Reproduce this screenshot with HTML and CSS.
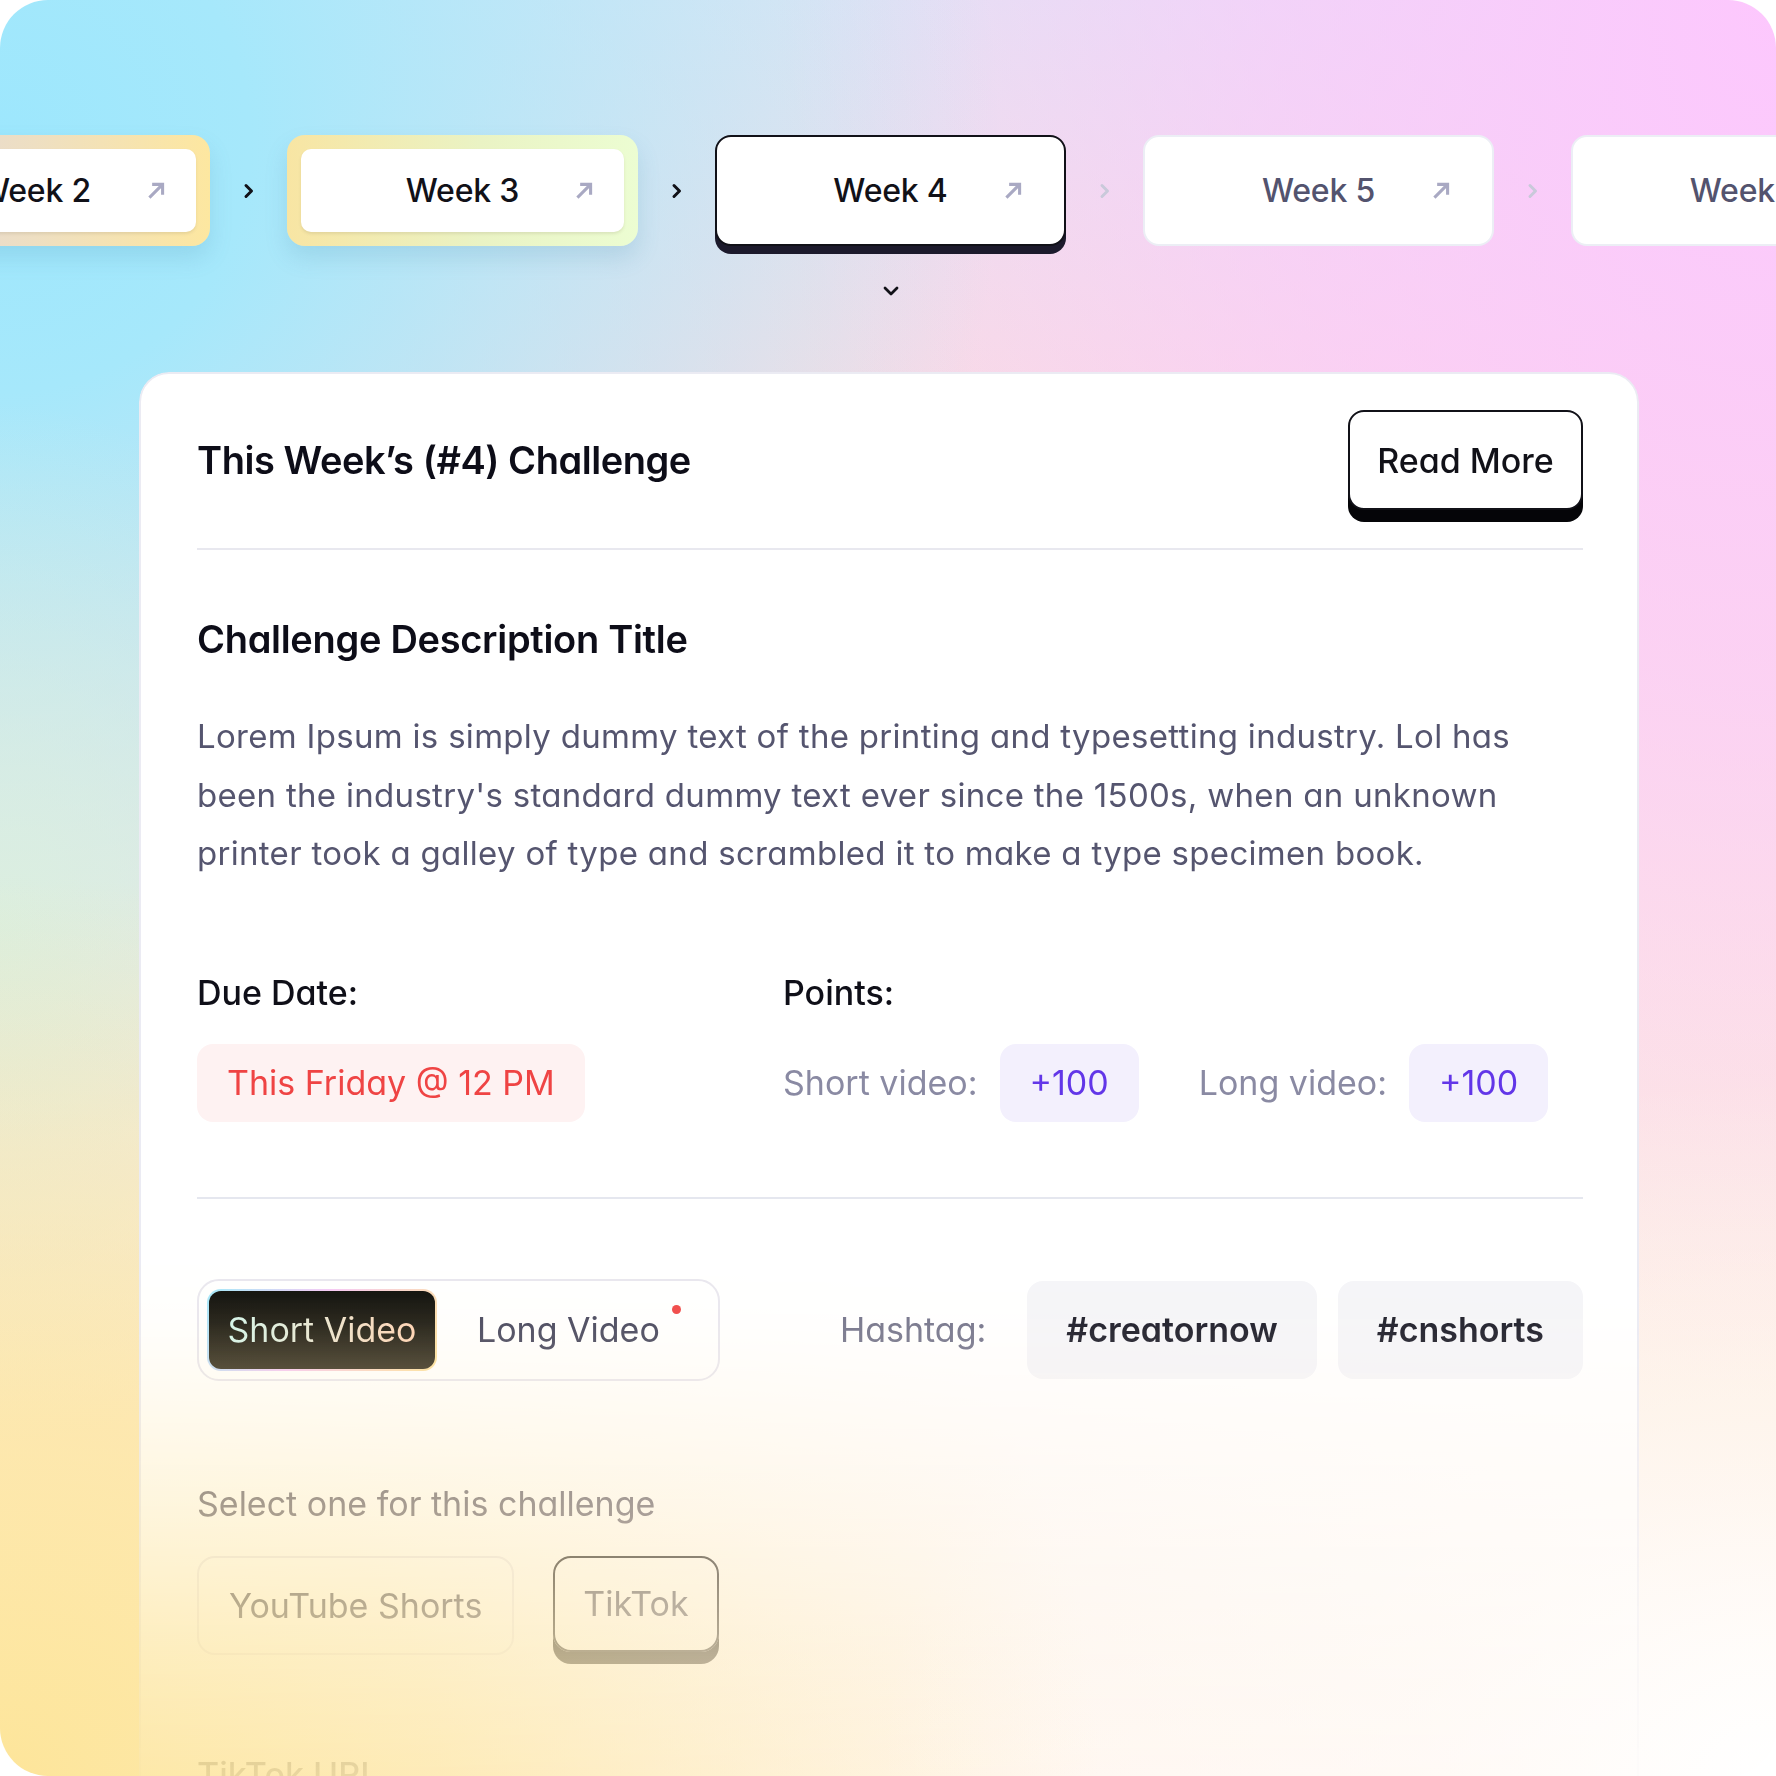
FILE: index.html
```html
<!DOCTYPE html>
<html lang="en">
<head>
<meta charset="utf-8">
<title>Weekly Challenge</title>
<link rel="stylesheet" href="styles.css">
</head>
<body>
<div class="page">
  <nav class="weeks">
    <div class="week week--past week--w2">
      <div class="week-inner">
        <span class="week-label">Week 2</span>
        <svg class="week-arrow" viewBox="0 0 20 20"><path d="M4 16 L16 4 M6.5 4 H16 V13.5"/></svg>
      </div>
    </div>
    <div class="sep sep--past"><svg viewBox="0 0 12 16"><path d="M3 2.5 L8.5 8 L3 13.5"/></svg></div>
    <div class="week week--past week--w3">
      <div class="week-inner">
        <span class="week-label">Week 3</span>
        <svg class="week-arrow" viewBox="0 0 20 20"><path d="M4 16 L16 4 M6.5 4 H16 V13.5"/></svg>
      </div>
    </div>
    <div class="sep sep--past"><svg viewBox="0 0 12 16"><path d="M3 2.5 L8.5 8 L3 13.5"/></svg></div>
    <div class="week-col">
      <div class="week week--current">
        <div class="week-inner">
          <span class="week-label">Week 4</span>
          <svg class="week-arrow" viewBox="0 0 20 20"><path d="M4 16 L16 4 M6.5 4 H16 V13.5"/></svg>
        </div>
      </div>
      <svg class="down-chevron" viewBox="0 0 16 10"><path d="M2 2 L8 8 L14 2"/></svg>
    </div>
    <div class="sep sep--future"><svg viewBox="0 0 12 16"><path d="M3 2.5 L8.5 8 L3 13.5"/></svg></div>
    <div class="week week--future">
      <div class="week-inner">
        <span class="week-label">Week 5</span>
        <svg class="week-arrow" viewBox="0 0 20 20"><path d="M4 16 L16 4 M6.5 4 H16 V13.5"/></svg>
      </div>
    </div>
    <div class="sep sep--future"><svg viewBox="0 0 12 16"><path d="M3 2.5 L8.5 8 L3 13.5"/></svg></div>
    <div class="week week--future">
      <div class="week-inner">
        <span class="week-label">Week 6</span>
        <svg class="week-arrow" viewBox="0 0 20 20"><path d="M4 16 L16 4 M6.5 4 H16 V13.5"/></svg>
      </div>
    </div>
  </nav>

  <section class="card">
    <header class="card-head">
      <h1 class="card-title">This Week’s (#4) Challenge</h1>
      <button class="btn-read">Read More</button>
    </header>
    <div class="divider"></div>

    <h2 class="desc-title">Challenge Description Title</h2>
    <p class="desc">Lorem Ipsum is simply dummy text of the printing and typesetting industry. Lol has been the industry's standard dummy text ever since the 1500s, when an unknown printer took a galley of type and scrambled it to make a type specimen book.</p>

    <div class="meta">
      <div class="meta-col">
        <div class="meta-label">Due Date:</div>
        <div class="meta-row">
          <span class="pill pill--due">This Friday @ 12 PM</span>
        </div>
      </div>
      <div class="meta-col">
        <div class="meta-label">Points:</div>
        <div class="meta-row">
          <span class="points-label">Short video:</span>
          <span class="pill pill--pts">+100</span>
          <span class="points-label points-label--second">Long video:</span>
          <span class="pill pill--pts">+100</span>
        </div>
      </div>
    </div>

    <div class="divider divider--second"></div>

    <div class="format-row">
      <div class="toggle">
        <div class="toggle-opt toggle-opt--active"><span class="toggle-text">Short Video</span></div>
        <div class="toggle-opt toggle-opt--idle">Long Video<span class="dot"></span></div>
      </div>
      <div class="hashtags">
        <span class="hashtag-label">Hashtag:</span>
        <span class="hashtag">#creatornow</span>
        <span class="hashtag">#cnshorts</span>
      </div>
    </div>

    <div class="select-label">Select one for this challenge</div>
    <div class="platforms">
      <button class="platform">YouTube Shorts</button>
      <button class="platform platform--active">TikTok</button>
    </div>

    <div class="url-label">TikTok URL</div>
    <div class="url-input"></div>
  </section>
</div>
</body>
</html>
```

FILE: styles.css
```css
* { box-sizing: border-box; }

body {
  margin: 0;
  background: #ffffff;
}

.page {
  width: 1776px;
  height: 1776px;
  border-radius: 48px;
  overflow: hidden;
  padding-top: 135px;
  font-family: Inter, "Noto Sans", sans-serif;
  font-feature-settings: "cv11" 1;
  background:
    radial-gradient(ellipse 900px 700px at 100% 100%, #ffffff 0%, rgba(255, 252, 250, 0.6) 40%, rgba(255, 255, 255, 0) 100%),
    radial-gradient(ellipse 1100px 900px at 0% 100%, #fde59a 0%, rgba(253, 229, 154, 0.7) 40%, rgba(253, 229, 154, 0) 100%),
    radial-gradient(ellipse 420px 520px at 0% 52%, rgba(218, 240, 222, 0.85) 0%, rgba(218, 240, 222, 0) 100%),
    radial-gradient(ellipse 1000px 1000px at 0% 8%, #9de7fd 0%, #a6e8fb 25%, rgba(166, 232, 251, 0) 100%),
    radial-gradient(ellipse 1000px 1400px at 100% 0%, #fdc7fd 0%, rgba(253, 199, 253, 0.6) 50%, rgba(253, 199, 253, 0) 100%),
    linear-gradient(180deg, #e2e4f2 0%, #f7dde4 22%, #fbe6e2 50%, #fdeee0 80%, #fff6ee 100%);
}

/* ---------- week strip ---------- */
.weeks {
  display: flex;
  align-items: flex-start;
  margin-left: -141px;
}

.week {
  flex: none;
  width: 351px;
  height: 111px;
}

.week-col {
  flex: none;
  display: flex;
  flex-direction: column;
  align-items: center;
}

.week-inner {
  height: 100%;
  display: grid;
  grid-template-columns: 1fr auto 1fr;
  align-items: center;
  background: #ffffff;
}

.week-label {
  grid-column: 2;
  font-size: 32px;
  font-weight: 500;
  letter-spacing: -0.2px;
  color: #111118;
}

.week-arrow {
  grid-column: 3;
  justify-self: end;
  width: 22px;
  height: 22px;
  fill: none;
  stroke: #a9a9c3;
  stroke-width: 2.8;
  stroke-linecap: butt;
  stroke-linejoin: miter;
}

.week--past {
  padding: 14px;
  border-radius: 18px;
  box-shadow: 0 12px 22px rgba(70, 140, 170, 0.18);
}

.week--past .week-inner {
  border-radius: 10px;
  box-shadow: 0 2px 3px rgba(120, 110, 80, 0.15);
}

.week--past .week-arrow { margin-right: 29px; }

.week--w2 { background: linear-gradient(90deg, #e2d6dc 0%, #eedfc2 50%, #fde7a0 100%); }
.week--w3 { background: linear-gradient(90deg, #f8e5a3 0%, #eaf3c4 55%, #ecfdd2 100%); }

.week--current .week-inner {
  border: 2px solid #111118;
  border-radius: 16px;
  box-shadow: 0 8px 0 #1c1a2c;
}

.week--current .week-arrow { margin-right: 40px; }

.week--future .week-inner {
  border: 2px solid #eceef5;
  border-radius: 16px;
}

.week--future .week-label { color: #53536e; }
.week--future .week-arrow { margin-right: 40px; }

.sep {
  flex: none;
  width: 77px;
  height: 111px;
  display: flex;
  align-items: center;
  justify-content: center;
}

.sep svg {
  width: 12px;
  height: 16px;
  fill: none;
  stroke-width: 3;
  stroke-linecap: round;
  stroke-linejoin: round;
}

.sep--past svg { stroke: #111118; }
.sep--future svg { stroke: #c9c9da; }

.down-chevron {
  margin-top: 40px;
  width: 16px;
  height: 10px;
  fill: none;
  stroke: #111118;
  stroke-width: 2.8;
  stroke-linecap: round;
  stroke-linejoin: round;
}

/* ---------- main card ---------- */
.card {
  width: 1500px;
  margin: 76px 0 0 139px;
  background: #ffffff;
  border: 2px solid #ebebf3;
  border-radius: 30px;
  padding: 36px 54px 200px 56px;
  -webkit-mask-image: linear-gradient(to bottom, #000 0px, #000 880px, rgba(0,0,0,0.95) 950px, rgba(0,0,0,0.6) 1128px, rgba(0,0,0,0.27) 1283px, rgba(0,0,0,0.08) 1404px, rgba(0,0,0,0.02) 1520px);
  mask-image: linear-gradient(to bottom, #000 0px, #000 880px, rgba(0,0,0,0.95) 950px, rgba(0,0,0,0.6) 1128px, rgba(0,0,0,0.27) 1283px, rgba(0,0,0,0.08) 1404px, rgba(0,0,0,0.02) 1520px);
}

.card-head {
  display: flex;
  align-items: center;
  justify-content: space-between;
}

.card-title {
  margin: 0;
  font-size: 38px;
  font-weight: 600;
  letter-spacing: -0.45px;
  color: #0d0d18;
}

.btn-read {
  width: 235px;
  height: 100px;
  border: 2px solid #111118;
  border-radius: 16px;
  background: #ffffff;
  box-shadow: 0 12px 0 #050508;
  font-family: inherit;
  font-feature-settings: inherit;
  font-size: 34px;
  font-weight: 500;
  color: #111118;
  padding: 0;
}

.divider {
  height: 2px;
  background: #e8e8ef;
  margin-top: 38px;
}

.desc-title {
  margin: 66px 0 0;
  font-size: 38px;
  line-height: 46px;
  font-weight: 600;
  letter-spacing: -0.3px;
  color: #0d0d18;
}

.desc {
  margin: 45px 0 0;
  max-width: 1345px;
  font-size: 33px;
  line-height: 58.5px;
  letter-spacing: 0.3px;
  color: #55556f;
}

.meta {
  margin-top: 90px;
  display: grid;
  grid-template-columns: 586px 1fr;
}

.meta-label {
  font-size: 34px;
  line-height: 40px;
  font-weight: 500;
  color: #0f0f18;
}

.meta-row {
  margin-top: 31px;
  display: flex;
  align-items: center;
}

.pill {
  height: 78px;
  display: inline-flex;
  align-items: center;
  padding: 0 30px;
  border-radius: 16px;
  font-size: 34px;
}

.pill--due {
  background: #fef2f2;
  color: #ef4444;
}

.pill--pts {
  background: #f3f0fd;
  color: #6236e8;
}

.points-label {
  font-size: 34px;
  color: #8a8aa3;
  margin-right: 22px;
}

.points-label--second { margin-left: 60px; }

.divider--second {
  margin-top: 75px;
  background: #e5e7ef;
}

.format-row {
  margin-top: 80px;
  display: flex;
  align-items: center;
  justify-content: space-between;
}

.toggle {
  display: flex;
  align-items: center;
  border: 2px solid #e9e7ef;
  border-radius: 22px;
  padding: 8px;
}

.toggle-opt {
  height: 82px;
  display: flex;
  align-items: center;
  font-size: 34px;
  position: relative;
}

.toggle-opt--active {
  width: 230px;
  justify-content: center;
  border-radius: 14px;
  border: 2px solid transparent;
  background:
    linear-gradient(180deg, #0e0e0b 0%, #3b3526 100%) padding-box,
    linear-gradient(120deg, #a3e9fb 0%, #f6c9f5 45%, #fde39c 100%) border-box;
}

.toggle-text {
  background: linear-gradient(90deg, #d4f6ec 0%, #ffd3b4 100%);
  -webkit-background-clip: text;
  background-clip: text;
  color: transparent;
}

.toggle-opt--idle {
  padding: 0 50px 0 40px;
  color: #4a4a60;
}

.dot {
  position: absolute;
  top: 16px;
  right: 29px;
  width: 9px;
  height: 9px;
  border-radius: 50%;
  background: #f04848;
}

.hashtags {
  display: flex;
  align-items: center;
}

.hashtag-label {
  font-size: 34px;
  color: #76768c;
  margin-right: 41px;
}

.hashtag {
  height: 98px;
  display: inline-flex;
  align-items: center;
  padding: 0 39px;
  border-radius: 16px;
  background: #f5f5f8;
  font-size: 34px;
  font-weight: 600;
  color: #1c1c28;
}

.hashtag + .hashtag { margin-left: 21px; }

.select-label {
  margin-top: 103px;
  font-size: 34px;
  line-height: 40px;
  color: #6a6676;
}

.platforms {
  margin-top: 32px;
  display: flex;
  gap: 39px;
}

.platform {
  height: 99px;
  padding: 0 30px;
  border: 2px solid #ebe9ef;
  border-radius: 18px;
  background: transparent;
  font-family: inherit;
  font-feature-settings: inherit;
  font-size: 34px;
  color: #4a4a5e;
}

.platform--active {
  height: 96px;
  padding: 0 28px;
  border-color: #111118;
  box-shadow: 0 12px 0 #050508;
}

.url-label {
  margin-top: 100px;
  font-size: 34px;
  line-height: 40px;
  font-weight: 500;
  color: #0f0f18;
}

.url-input {
  margin-top: 30px;
  height: 98px;
  border: 2px solid #e8e8ef;
  border-radius: 18px;
}
```
